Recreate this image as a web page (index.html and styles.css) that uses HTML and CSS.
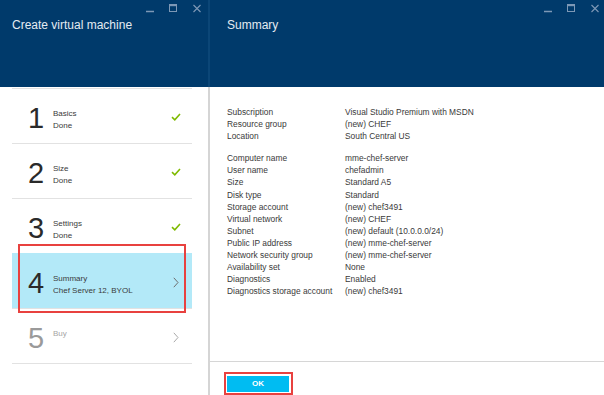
FILE: index.html
```html
<!DOCTYPE html>
<html>
<head>
<meta charset="utf-8">
<link rel="stylesheet" href="styles.css">
</head>
<body>
<div class="app">
  <section class="blade blade-left">
    <header class="blade-head">
      <div class="controls">
        <svg width="56" height="10" viewBox="0 0 56 10">
          <line x1="0" y1="8.5" x2="8" y2="8.5" stroke="#7d98b6" stroke-width="1.5"/>
          <rect x="23.5" y="1.5" width="7" height="7" fill="none" stroke="#7d98b6" stroke-width="1"/>
          <rect x="23" y="1" width="8" height="2.2" fill="#7d98b6"/>
          <path d="M47.5 2 L54.5 9 M54.5 2 L47.5 9" stroke="#7d98b6" stroke-width="1.1" fill="none"/>
        </svg>
      </div>
      <h1 class="blade-title">Create virtual machine</h1>
    </header>
    <div class="blade-body left-body">
      <ul class="steps">
        <li class="step">
          <span class="num">1</span>
          <div class="labels"><div>Basics</div><div>Done</div></div>
          <svg class="icon check" width="10" height="8" viewBox="0 0 10 8"><path d="M1 4.2 L3.8 6.8 L9 1" fill="none" stroke="#7fba00" stroke-width="1.6"/></svg>
        </li>
        <li class="step">
          <span class="num">2</span>
          <div class="labels"><div>Size</div><div>Done</div></div>
          <svg class="icon check" width="10" height="8" viewBox="0 0 10 8"><path d="M1 4.2 L3.8 6.8 L9 1" fill="none" stroke="#7fba00" stroke-width="1.6"/></svg>
        </li>
        <li class="step">
          <span class="num">3</span>
          <div class="labels"><div>Settings</div><div>Done</div></div>
          <svg class="icon check" width="10" height="8" viewBox="0 0 10 8"><path d="M1 4.2 L3.8 6.8 L9 1" fill="none" stroke="#7fba00" stroke-width="1.6"/></svg>
        </li>
        <li class="step active">
          <span class="num">4</span>
          <div class="labels"><div>Summary</div><div>Chef Server 12, BYOL</div></div>
          <svg class="icon chev" width="6" height="11" viewBox="0 0 6 11"><path d="M0.8 0.8 L5 5.5 L0.8 10.2" fill="none" stroke="#6d6d6d" stroke-width="1"/></svg>
        </li>
        <li class="step disabled">
          <span class="num">5</span>
          <div class="labels"><div>Buy</div><div>&nbsp;</div></div>
          <svg class="icon chev" width="6" height="11" viewBox="0 0 6 11"><path d="M0.8 0.8 L5 5.5 L0.8 10.2" fill="none" stroke="#a8a8a8" stroke-width="1"/></svg>
        </li>
      </ul>
    </div>
  </section>
  <section class="blade blade-right">
    <header class="blade-head">
      <div class="controls">
        <svg width="56" height="10" viewBox="0 0 56 10">
          <line x1="0" y1="8.5" x2="8" y2="8.5" stroke="#7d98b6" stroke-width="1.5"/>
          <rect x="23.5" y="1.5" width="7" height="7" fill="none" stroke="#7d98b6" stroke-width="1"/>
          <rect x="23" y="1" width="8" height="2.2" fill="#7d98b6"/>
          <path d="M47.5 2 L54.5 9 M54.5 2 L47.5 9" stroke="#7d98b6" stroke-width="1.1" fill="none"/>
        </svg>
      </div>
      <h1 class="blade-title">Summary</h1>
    </header>
    <div class="blade-body right-body">
      <div class="summary">
        <dl class="group">
          <div class="row"><dt>Subscription</dt><dd>Visual Studio Premium with MSDN</dd></div>
          <div class="row"><dt>Resource group</dt><dd>(new) CHEF</dd></div>
          <div class="row"><dt>Location</dt><dd>South Central US</dd></div>
        </dl>
        <dl class="group">
          <div class="row"><dt>Computer name</dt><dd>mme-chef-server</dd></div>
          <div class="row"><dt>User name</dt><dd>chefadmin</dd></div>
          <div class="row"><dt>Size</dt><dd>Standard A5</dd></div>
          <div class="row"><dt>Disk type</dt><dd>Standard</dd></div>
          <div class="row"><dt>Storage account</dt><dd>(new) chef3491</dd></div>
          <div class="row"><dt>Virtual network</dt><dd>(new) CHEF</dd></div>
          <div class="row"><dt>Subnet</dt><dd>(new) default (10.0.0.0/24)</dd></div>
          <div class="row"><dt>Public IP address</dt><dd>(new) mme-chef-server</dd></div>
          <div class="row"><dt>Network security group</dt><dd>(new) mme-chef-server</dd></div>
          <div class="row"><dt>Availability set</dt><dd>None</dd></div>
          <div class="row"><dt>Diagnostics</dt><dd>Enabled</dd></div>
          <div class="row"><dt>Diagnostics storage account</dt><dd>(new) chef3491</dd></div>
        </dl>
      </div>
      <footer class="blade-foot">
        <div class="ok-frame"><button class="ok">OK</button></div>
      </footer>
    </div>
  </section>
</div>
</body>
</html>
```

FILE: styles.css
```css
* { box-sizing: border-box; }
html, body {
  margin: 0;
  padding: 0;
  background: #ffffff;
  font-family: "Segoe UI", "Liberation Sans", Arial, sans-serif;
}
.app {
  display: flex;
  width: 604px;
  height: 395px;
  overflow: hidden;
}
.blade {
  display: flex;
  flex-direction: column;
  height: 395px;
}
.blade-left { width: 210px; flex: none; }
.blade-right { flex: 1; }

.blade-head {
  height: 87px;
  flex: none;
  background: #003a6b;
  display: flex;
  flex-direction: column;
}
.blade-left .blade-head {
  border-right: 2px solid #0b4677;
  padding: 0 0 0 12px;
}
.blade-right .blade-head {
  padding: 0 0 0 17px;
}
.controls {
  display: flex;
  justify-content: flex-end;
  padding-top: 3px;
  height: 13px;
}
.blade-left .controls { padding-right: 6px; }
.blade-right .controls { padding-right: 4px; }
.controls svg { display: block; }
.blade-title {
  margin: 4px 0 0 0;
  font-size: 12px;
  line-height: 16px;
  font-weight: normal;
  color: #e4ebf2;
}

.blade-body { flex: 1; }
.left-body {
  border-right: 2px solid #d5d5d5;
  padding: 1px 16px 0 12px;
}
.steps {
  list-style: none;
  margin: 0;
  padding: 0;
  border-top: 1px solid #e2e2e2;
}
.step {
  display: flex;
  align-items: flex-start;
  height: 55px;
  border-bottom: 1px solid #e2e2e2;
  padding-left: 16px;
  color: #333333;
}
.step.active {
  background: #b3e9f8;
  margin-top: -1px;
  height: 56px;
  padding-top: 1px;
  position: relative;
}
.step.active::after {
  content: "";
  position: absolute;
  left: 6px;
  right: 6px;
  top: -9px;
  bottom: -5px;
  border: 2px solid #e8413f;
}
.num {
  width: 25px;
  flex: none;
  font-size: 29px;
  line-height: 29px;
  margin-top: 15px;
  color: #2a2a2a;
}
.labels {
  flex: 1;
  padding-top: 19px;
  font-size: 8px;
  line-height: 12px;
  color: #3a3a3a;
}
.icon { flex: none; display: block; }
.check { margin-top: 24px; margin-right: 11px; }
.chev { margin-top: 23px; margin-right: 13px; }
.step.disabled .num { color: #9a9a9a; }
.step.disabled .labels { color: #a5a5a5; }

.right-body {
  display: flex;
  flex-direction: column;
}
.summary {
  flex: 1;
  padding: 19px 0 0 17px;
}
.group { margin: 0 0 10px 0; }
.row {
  display: flex;
  font-size: 8.4px;
  line-height: 12.1px;
  color: #3a3a3a;
}
.row dt { width: 118px; flex: none; }
.row dd { margin: 0; }

.blade-foot {
  flex: none;
  height: 34px;
  border-top: 1px solid #d6d6d6;
  padding: 10px 0 0 14px;
}
.ok-frame {
  display: inline-block;
  border: 2px solid #e8413f;
  padding: 2px 2px 1px 1px;
}
.ok {
  display: block;
  width: 62px;
  height: 16px;
  border: none;
  background: #00bcf2;
  color: #ffffff;
  font-family: "Segoe UI", "Liberation Sans", Arial, sans-serif;
  font-size: 8px;
  font-weight: bold;
  padding: 0;
  line-height: 16px;
  text-align: center;
}
```
